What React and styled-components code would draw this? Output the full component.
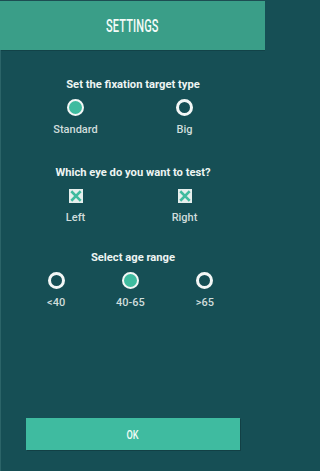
import React from "react";
import styled, { createGlobalStyle } from "styled-components";

const Global = createGlobalStyle`
  html, body { margin: 0; padding: 0; background: #164f55; }
  body { width: 265px; height: 471px; overflow: hidden; font-family: Roboto, "Noto Sans", sans-serif; }
  #root { height: 471px; }
`;

const Screen = styled.div`
  height: 471px;
  display: flex;
  flex-direction: column;
  background: #164f55;
  border-top: 1px solid #1d4d52;
  box-sizing: border-box;
`;

const Header = styled.header`
  height: 49px;
  flex: none;
  background: #3a9e88;
  display: flex;
  align-items: center;
  justify-content: center;
  box-shadow: 0 1px 0 rgba(0, 0, 0, 0.15);
`;

const Title = styled.h1`
  margin: 0;
  color: #f4fbf8;
  font-family: Roboto, sans-serif;
  font-weight: 500;
  font-size: 19px;
  letter-spacing: 0.2px;
  transform: scaleX(0.58);
  line-height: 1;
`;

const Body = styled.main`
  flex: 1;
  display: flex;
  flex-direction: column;
  border-left: 1px solid #2b6468;
  padding-top: 28px;
`;

const Section = styled.section`
  display: flex;
  flex-direction: column;
  margin-bottom: ${(p) => p.$gap}px;
`;

const Question = styled.div`
  text-align: center;
  color: #eef5f3;
  font-weight: 700;
  font-size: 11.2px;
  line-height: 14px;
  margin-bottom: 7px;
`;

const Options = styled.div`
  display: grid;
  grid-template-columns: repeat(${(p) => p.$cols}, 1fr);
  padding: 0 ${(p) => p.$pr}px 0 ${(p) => p.$pl}px;
`;

const Option = styled.div`
  display: flex;
  flex-direction: column;
  align-items: center;
`;

const Radio = styled.span`
  width: 17px;
  height: 17px;
  box-sizing: border-box;
  border-radius: 50%;
  border: ${(p) => (p.$on ? "2px" : "3px")} solid #f3f7f6;
  background: ${(p) => (p.$on ? "#3fbb9f" : "#164f55")};
`;

const ControlSlot = styled.div`
  height: 17px;
  display: flex;
  align-items: center;
  justify-content: center;
`;

const Label = styled.div`
  margin-top: 7px;
  color: #d0dddc;
  font-size: 11px;
  font-weight: 500;
  line-height: 13px;
`;

const Footer = styled.div`
  margin-top: auto;
  padding: 0 25px 21px 25px;
`;

const OkButton = styled.button`
  width: 100%;
  height: 32px;
  border: none;
  background: #3fbba0;
  box-shadow: 1px 1px 0 rgba(0, 0, 0, 0.18);
  color: #f2fbf7;
  font-family: Roboto, sans-serif;
  font-weight: 500;
  font-size: 13px;
  padding: 0;
  cursor: pointer;
`;

const OkText = styled.span`
  display: inline-block;
  transform: scaleX(0.7);
`;

const Check = () => (
  <svg width="14" height="14" viewBox="0 0 14 14">
    <rect x="0" y="0" width="14" height="14" fill="#e6efed" />
    <path d="M3.2 3.2 L10.8 10.8 M10.8 3.2 L3.2 10.8" stroke="#3fbb9f" strokeWidth="2.6" strokeLinecap="square" />
  </svg>
);

export default function App() {
  return (
    <>
      <Global />
      <Screen>
        <Header>
          <Title>SETTINGS</Title>
        </Header>
        <Body>
          <Section $gap={30}>
            <Question>Set the fixation target type</Question>
            <Options $cols={2} $pl={20} $pr={26}>
              <Option>
                <ControlSlot><Radio $on /></ControlSlot>
                <Label>Standard</Label>
              </Option>
              <Option>
                <ControlSlot><Radio /></ControlSlot>
                <Label>Big</Label>
              </Option>
            </Options>
          </Section>
          <Section $gap={27}>
            <Question>Which eye do you want to test?</Question>
            <Options $cols={2} $pl={20} $pr={26}>
              <Option>
                <ControlSlot><Check /></ControlSlot>
                <Label>Left</Label>
              </Option>
              <Option>
                <ControlSlot><Check /></ControlSlot>
                <Label>Right</Label>
              </Option>
            </Options>
          </Section>
          <Section $gap={0}>
            <Question>Select age range</Question>
            <Options $cols={3} $pl={18} $pr={23}>
              <Option>
                <ControlSlot><Radio /></ControlSlot>
                <Label>&lt;40</Label>
              </Option>
              <Option>
                <ControlSlot><Radio $on /></ControlSlot>
                <Label>40-65</Label>
              </Option>
              <Option>
                <ControlSlot><Radio /></ControlSlot>
                <Label>&gt;65</Label>
              </Option>
            </Options>
          </Section>
          <Footer>
            <OkButton><OkText>OK</OkText></OkButton>
          </Footer>
        </Body>
      </Screen>
    </>
  );
}
